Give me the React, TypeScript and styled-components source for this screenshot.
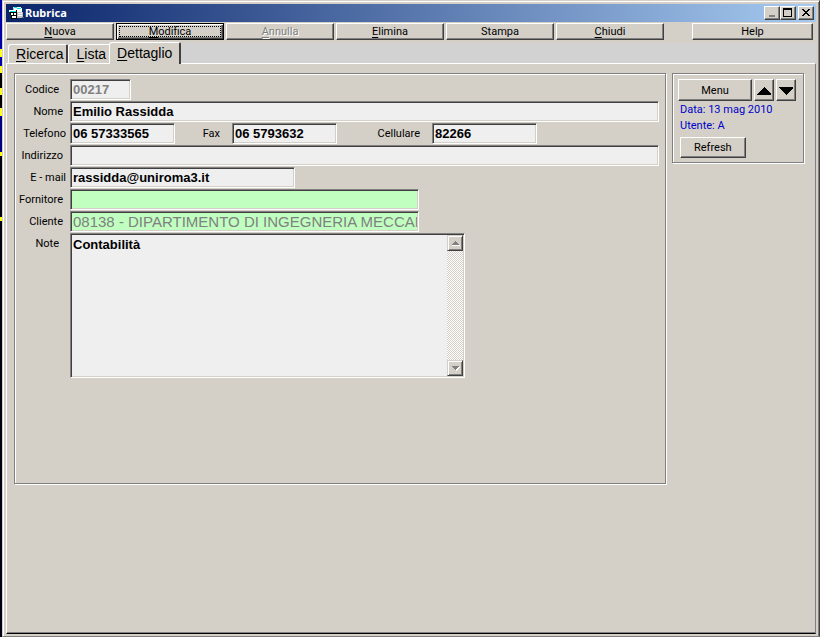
import React from "react";
import styled, { createGlobalStyle, css } from "styled-components";

const face = "#d4d0c8";
const shade = "#808080";
const dark = "#404040";
const field = "#efefef";
const green = "#c0ffc0";

const GlobalStyle = createGlobalStyle`
  * { box-sizing: border-box; }
  body {
    margin: 0;
    background: ${face};
    font-family: Roboto, "Liberation Sans", sans-serif;
    font-size: 11px;
    line-height: 14px;
    color: #000;
  }
  button, input, textarea { font: inherit; color: inherit; border-radius: 0; margin: 0; }
  u { text-underline-offset: 2px; text-decoration-thickness: 1px; text-decoration-skip-ink: none; }
`;

const raised = css`
  border: 1px solid;
  border-color: #fff ${dark} ${dark} #fff;
  box-shadow: inset -1px -1px 0 ${shade};
  background: ${face};
`;

const etched = css`
  border: 1px solid ${shade};
  box-shadow: inset 1px 1px 0 #fff, 1px 1px 0 #fff;
`;

const Desktop = styled.div`
  display: flex;
  min-height: 100vh;
  padding-left: 2px;
  background: linear-gradient(
    #0000a8 49px, #ffff20 49px 57px, #0000a8 57px 66px, #ffff20 66px 73px,
    #000 73px 88px, #ffff20 88px 95px, #000 95px 108px, #ffff20 108px 116px,
    #000080 116px 152px, #ffff00 152px 156px, #000010 156px 217px,
    #ffff00 217px 221px, #000010 221px
  );
`;

const Window = styled.main`
  flex: 1;
  min-width: 0;
  display: flex;
  flex-direction: column;
  padding: 2px 3px 2px 2px;
  background: ${face};
  border: 1px solid;
  border-color: ${face} ${dark} ${shade} ${face};
  box-shadow: inset 1px 1px 0 #fff, inset -1px 0 0 ${shade};
`;

const TitleBar = styled.header`
  display: flex;
  align-items: center;
  height: 18px;
  margin: 1px 0 1px 1px;
  padding: 0 2px 0 3px;
  background: linear-gradient(90deg, #0a246a, #a6caf0);
  color: #fff;
`;

const Title = styled.h1`
  flex: 1;
  margin: 0 0 0 1px;
  font: bold 11px/16px "Noto Sans", sans-serif;
`;

const CaptionButton = styled.button<{ $apart?: boolean }>`
  ${raised}
  display: flex;
  align-items: center;
  justify-content: center;
  width: 16px;
  height: 14px;
  padding: 0;
  margin-left: ${(p) => (p.$apart ? 2 : 0)}px;
`;

const Toolbar = styled.nav`
  display: flex;
  gap: 2px;
  padding: 0 3px 0 1px;
  margin-bottom: 3px;
`;

const PushButton = styled.button<{ $basis?: number; $height?: number; $apart?: boolean; $focused?: boolean }>`
  ${raised}
  flex: ${(p) => (p.$basis ? `1 1 ${p.$basis}px` : "none")};
  min-width: 0;
  height: ${(p) => p.$height ?? 17}px;
  padding: 0 13px;
  line-height: 13px;
  margin-left: ${(p) => (p.$apart ? 26 : 0)}px;
  &:disabled { color: ${shade}; text-shadow: 1px 1px 0 #fff; }
  ${(p) =>
    p.$focused &&
    css`
      border-color: #000;
      box-shadow: inset 1px 1px 0 #fff, inset -1px -1px 0 ${dark}, inset -2px -2px 0 ${shade};
      outline: 1px dotted #000;
      outline-offset: -4px;
    `}
`;

const TabStrip = styled.div`
  display: flex;
  align-items: flex-end;
  height: 20px;
  padding-left: 3px;
  background: #d2d2d2;
`;

const Tab = styled.button<{ $active?: boolean }>`
  height: ${(p) => (p.$active ? 22 : 19)}px;
  margin: ${(p) => (p.$active ? "0 0 -1px -2px" : "0")};
  padding: ${(p) => (p.$active ? "0 7px 1px" : "0 3px 0 7px")};
  border: solid;
  border-width: 1px 2px 0 1px;
  border-color: #fff ${dark} transparent #fff;
  border-radius: 3px 2px 0 0;
  background: ${face};
  font: 14px/16px "Liberation Sans", sans-serif;
  position: relative;
`;

const TabPage = styled.section`
  flex: 1;
  display: flex;
  align-items: flex-start;
  gap: 6px;
  margin-left: 1px;
  padding: 9px 11px 9px 7px;
  border: 1px solid;
  border-color: #fff ${shade} #000 #fff;
  box-shadow: inset 0 -1px 0 ${shade};
`;

const Detail = styled.form`
  ${etched}
  flex: 1;
  min-width: 0;
  min-height: 411px;
  padding: 5px 6px 0 4px;
`;

const Row = styled.div`
  display: flex;
  align-items: flex-start;
  height: 22px;
`;

const Label = styled.label<{ $inset?: number; $width?: number }>`
  flex: none;
  width: ${(p) => p.$width ?? 51}px;
  padding: 4px ${(p) => p.$inset ?? 7}px 0 0;
  text-align: right;
  white-space: nowrap;
`;

const sunken = css`
  border: 1px solid;
  border-color: ${shade} #fff #fff ${shade};
  box-shadow: inset 1px 1px 0 ${dark}, inset -1px -1px 0 ${face};
`;

const TextBox = styled.input<{ $width?: number; $linked?: boolean }>`
  ${sunken}
  flex: ${(p) => (p.$width ? `0 1 ${p.$width}px` : "1")};
  min-width: 0;
  height: 21px;
  padding: 0 1px 1px 2px;
  background: ${(p) => (p.$linked ? green : field)};
  font: ${(p) => (p.$linked ? "15px" : "bold 13px")} "Liberation Sans", sans-serif;
  &:disabled { color: ${shade}; }
`;

const Memo = styled.div`
  ${sunken}
  display: flex;
  flex: 0 1 395px;
  min-width: 0;
  height: 145px;
  padding: 1px;
`;

const MemoText = styled.textarea`
  flex: 1;
  min-width: 0;
  padding: 2px 1px;
  border: 0;
  outline: 0;
  resize: none;
  overflow: hidden;
  background: ${field};
  font: bold 13px/16px "Liberation Sans", sans-serif;
`;

const ScrollBar = styled.div`
  display: flex;
  flex-direction: column;
  justify-content: space-between;
  width: 16px;
  background: repeating-conic-gradient(#fff 0 25%, ${face} 0 50%) 0 0 / 2px 2px;
`;

const ScrollButton = styled.button`
  display: flex;
  align-items: center;
  justify-content: center;
  height: 16px;
  padding: 0;
  border: 1px solid;
  border-color: ${face} ${dark} ${dark} ${face};
  box-shadow: inset 1px 1px 0 #fff, inset -1px -1px 0 ${shade};
  background: ${face};
`;

const SidePanel = styled.aside`
  ${etched}
  flex: none;
  width: 132px;
  padding: 5px 7px 4px 5px;
`;

const MenuRow = styled.div`
  display: flex;
  gap: 2px;
  margin-bottom: 1px;
`;

const MenuButton = styled(PushButton)`
  flex: 1;
  height: 22px;
`;

const ArrowButton = styled.button`
  ${raised}
  display: flex;
  align-items: center;
  justify-content: center;
  width: 20px;
  height: 22px;
  padding: 2px 0 0;
`;

const Info = styled.p`
  margin: 0 0 0 2px;
  line-height: 16px;
  color: #0000c8;
  white-space: nowrap;
`;

const RefreshBox = styled.div`
  display: flex;
  margin: 3px 0 0 2px;
`;

const AppIcon = () => (
  <svg width="15" height="14" viewBox="0 0 15 14" shapeRendering="crispEdges" aria-hidden="true">
    <path d="M4 1h8v1h1v4h1v5h-1v1H8V6H4z" fill="#c0c0c0" />
    <path d="M4 1h8v1h1v4H5V2H4z" fill="#fff" />
    <path d="M5 1h3v1h4v1H8V2H5z" fill="#00e8e8" />
    <path d="M7 4h5v1H7zM9 7h4v1H9zM9 9h4v1H9z" fill="#fff" />
    <path d="M1 4h7v9H2V9H1z" fill="#000" />
    <path d="M0 4h7v2H0z" fill="#fff" />
    <path d="M1 5h6v1H1z" fill="#00e8e8" />
    <path d="M2 7h2v2H2zM5 7h2v2H5zM3 10h4v2H3z" fill="#fff" />
    <path d="M13 11h2v1h-2z" fill="#606060" />
  </svg>
);

const Triangle = ({ down, small }: { down?: boolean; small?: boolean }) => (
  <svg
    width={small ? 9 : 14}
    height={small ? 6 : 8}
    viewBox={small ? "0 0 9 6" : "0 0 14 8"}
    shapeRendering="crispEdges"
    aria-hidden="true"
  >
    {small ? (
      <>
        <path d={down ? "M2 2h7L5 6z" : "M1 5h8v1H1z"} fill="#fff" />
        <path d={down ? "M0 1h8L4 5z" : "M0 5h8L4 1z"} fill={shade} />
      </>
    ) : (
      <path d={down ? "M0 0h14v1L8 8H7L0 1z" : "M0 8h14V7L8 0H7L0 7z"} fill="#000" />
    )}
  </svg>
);

const Hot = ({ text }: { text: string }) => (
  <>
    <u>{text[0]}</u>
    {text.slice(1)}
  </>
);

export default function App() {
  return (
    <Desktop>
      <GlobalStyle />
      <Window>
        <TitleBar>
          <AppIcon />
          <Title>Rubrica</Title>
          <CaptionButton aria-label="Riduci a icona">
            <svg width="12" height="10" shapeRendering="crispEdges"><path d="M3 7h6v2H3z" fill={shade} /></svg>
          </CaptionButton>
          <CaptionButton aria-label="Ingrandisci">
            <svg width="12" height="10" shapeRendering="crispEdges"><path d="M1 0h9v9H1zM2 2v6h7V2z" fillRule="evenodd" /></svg>
          </CaptionButton>
          <CaptionButton $apart aria-label="Chiudi finestra">
            <svg width="12" height="10" shapeRendering="crispEdges">
              <path d="M2 1h2v1h1v1h2V2h1V1h2v1H9v1H8v1H7v1h1v1h1v1h1v1H8V7H7V6H5v1H4v1H2V7h1V6h1V5h1V4H4V3H3V2H2z" />
            </svg>
          </CaptionButton>
        </TitleBar>

        <Toolbar>
          <PushButton $basis={108}><Hot text="Nuova" /></PushButton>
          <PushButton $basis={108} $focused><Hot text="Modifica" /></PushButton>
          <PushButton $basis={108} disabled><Hot text="Annulla" /></PushButton>
          <PushButton $basis={108}><Hot text="Elimina" /></PushButton>
          <PushButton $basis={108}>Stampa</PushButton>
          <PushButton $basis={108}><Hot text="Chiudi" /></PushButton>
          <PushButton $basis={121} $apart>Help</PushButton>
        </Toolbar>

        <TabStrip role="tablist">
          <Tab role="tab"><Hot text="Ricerca" /></Tab>
          <Tab role="tab"><Hot text="Lista" /></Tab>
          <Tab role="tab" $active aria-selected="true"><Hot text="Dettaglio" /></Tab>
        </TabStrip>

        <TabPage>
          <Detail onSubmit={(e) => e.preventDefault()}>
            <Row>
              <Label htmlFor="codice" $inset={11}>Codice</Label>
              <TextBox id="codice" $width={61} disabled defaultValue="00217" />
            </Row>
            <Row>
              <Label htmlFor="nome">Nome</Label>
              <TextBox id="nome" defaultValue="Emilio Rassidda" />
            </Row>
            <Row>
              <Label htmlFor="telefono" $inset={4}>Telefono</Label>
              <TextBox id="telefono" $width={105} defaultValue="06 57333565" />
              <Label htmlFor="fax" $inset={12} $width={57}>Fax</Label>
              <TextBox id="fax" $width={105} defaultValue="06 5793632" />
              <Label htmlFor="cellulare" $inset={12} $width={95}>Cellulare</Label>
              <TextBox id="cellulare" $width={105} defaultValue="82266" />
            </Row>
            <Row>
              <Label htmlFor="indirizzo">Indirizzo</Label>
              <TextBox id="indirizzo" />
            </Row>
            <Row>
              <Label htmlFor="email" $inset={4}>E - mail</Label>
              <TextBox id="email" $width={225} defaultValue="rassidda@uniroma3.it" />
            </Row>
            <Row>
              <Label htmlFor="fornitore">Fornitore</Label>
              <TextBox id="fornitore" $width={349} $linked />
            </Row>
            <Row>
              <Label htmlFor="cliente">Cliente</Label>
              <TextBox id="cliente" $width={349} $linked disabled defaultValue="08138 - DIPARTIMENTO DI INGEGNERIA MECCANICA" />
            </Row>
            <Row>
              <Label htmlFor="note" $inset={11}>Note</Label>
              <Memo>
                <MemoText id="note" defaultValue="Contabilità" />
                <ScrollBar>
                  <ScrollButton type="button" aria-label="Scorri su"><Triangle small /></ScrollButton>
                  <ScrollButton type="button" aria-label="Scorri giù"><Triangle small down /></ScrollButton>
                </ScrollBar>
              </Memo>
            </Row>
          </Detail>

          <SidePanel>
            <MenuRow>
              <MenuButton>Menu</MenuButton>
              <ArrowButton aria-label="Precedente"><Triangle /></ArrowButton>
              <ArrowButton aria-label="Successivo"><Triangle down /></ArrowButton>
            </MenuRow>
            <Info>Data: 13 mag 2010</Info>
            <Info>Utente: A</Info>
            <RefreshBox>
              <PushButton $height={21}>Refresh</PushButton>
            </RefreshBox>
          </SidePanel>
        </TabPage>
      </Window>
    </Desktop>
  );
}
